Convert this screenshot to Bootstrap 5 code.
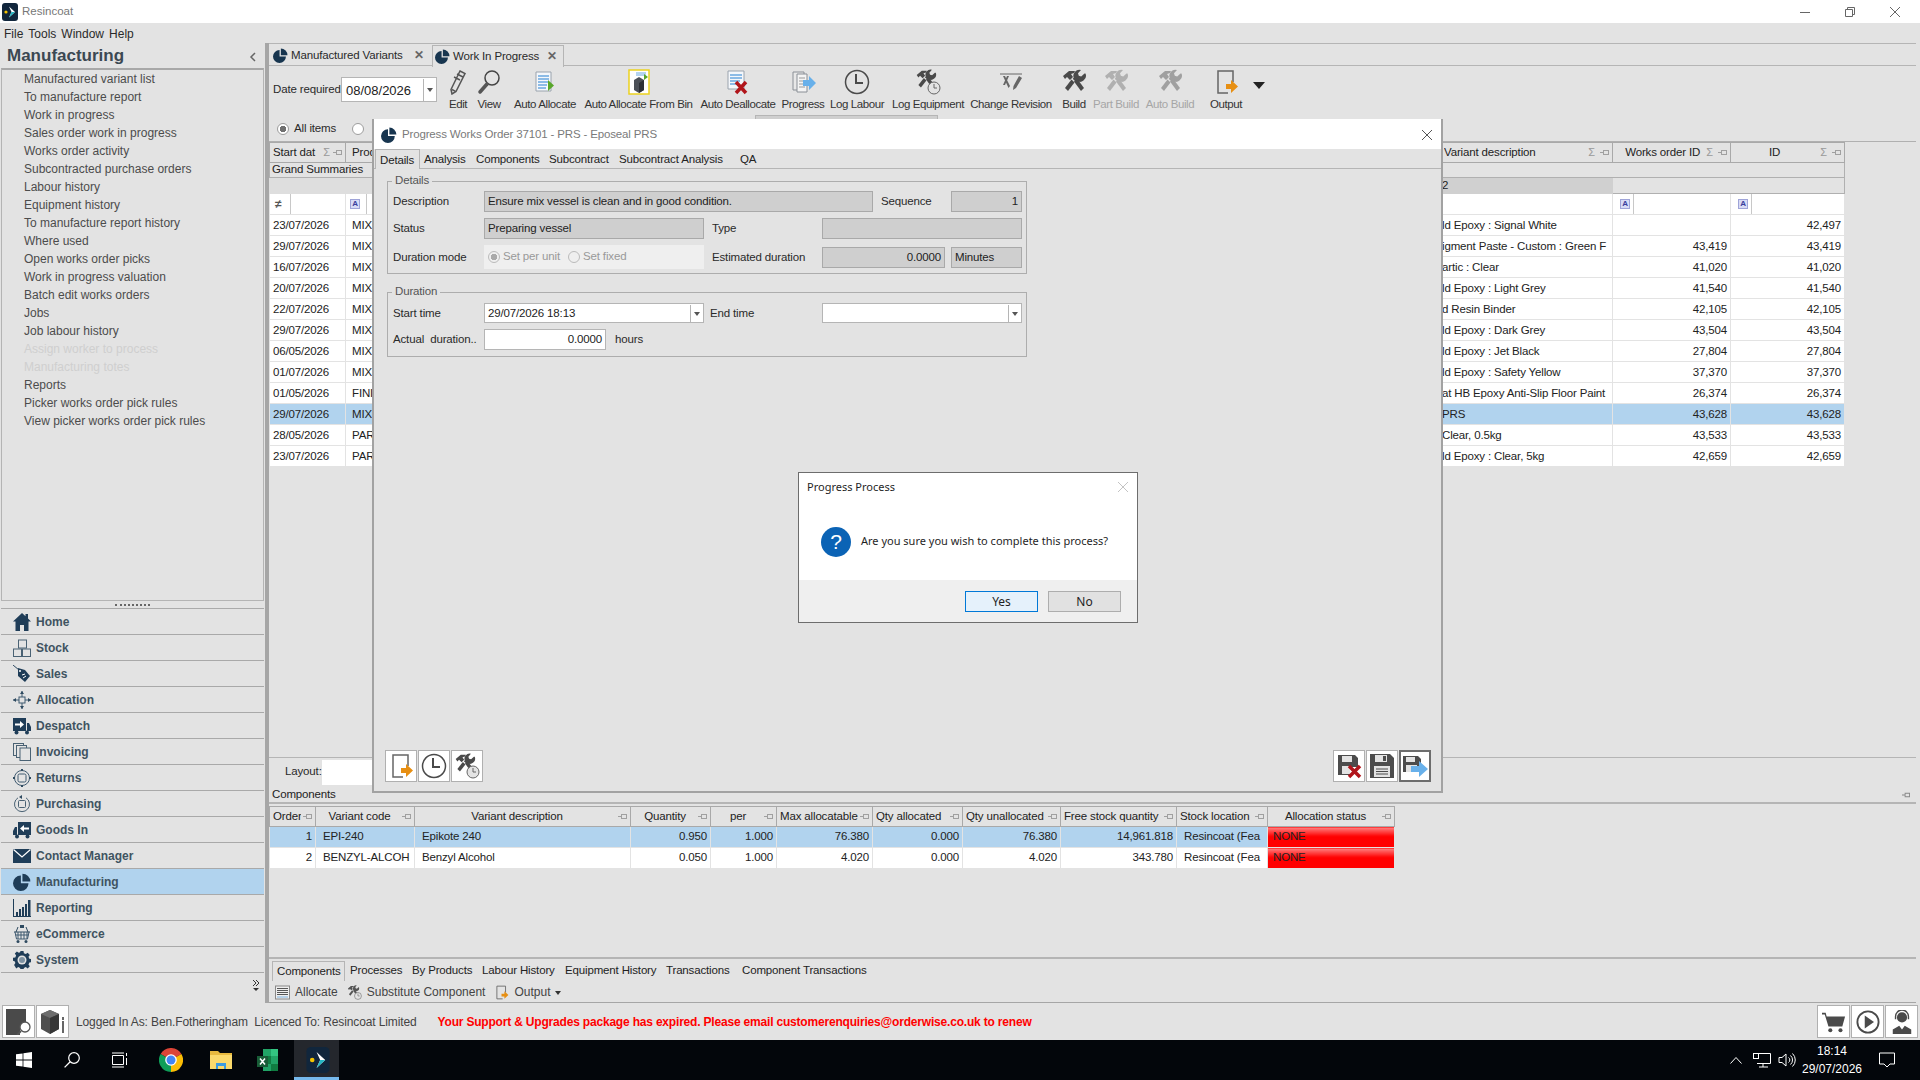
<!DOCTYPE html>
<html lang="en">
<head>
<meta charset="UTF-8">
<title>Resincoat</title>
<link href="https://cdn.jsdelivr.net/npm/bootstrap@5.3.3/dist/css/bootstrap.min.css" rel="stylesheet">
<style>
  body { margin: 0; background: #e3e3e3; font: 12px/1.2 "Liberation Sans", Arial, sans-serif; color: #2a2a2a; }
  .desk { position: relative; width: 1920px; height: 1080px; overflow: hidden; background: #e3e3e3; }
  svg { display: block; flex: none; }

  /* window chrome */
  .app-title { height: 23px; background: #fff; color: #777; padding-left: 2px; font-size: 11.5px; }
  .app-title span { margin-left: 2px; }
  .win-ctl { margin-left: auto; gap: 31px; padding-right: 18px; color: #666; }
  .menu-strip { height: 20px; gap: 5px; padding: 3px 0 0 4px; font-size: 12px; }

  /* left panel */
  .side { width: 264px; }
  .side-head { height: 25px; padding: 2px 7px 0; font-size: 17px; font-weight: 700; color: #3b4852; }
  .side-list { height: 533px; border: 1px solid #b4b4b4; border-top: 2px solid #a8a8a8; margin-left: 1px; padding-top: 0; background: #e3e3e3; }
  .side-list .list-group-item { background: none; border: 0; padding: 0 0 0 22px; height: 18px; line-height: 18px; color: #4c4c4c; font-size: 12px; }
  .side-list .list-group-item.disabled { color: #cfcfcf; }
  .grip { height: 7px; font-size: 0; }
  .grip i { width: 35px; height: 1px; border-top: 2px dotted #666; }
  .mod-list { border-top: 1px solid #aaa; margin-left: 1px; border-radius: 0; }
  .mod-list .list-group-item { height: 26px; padding: 1px 0 0 12px; background: none; border: 0; border-bottom: 1px solid #a9a9a9; border-radius: 0; font-weight: 700; color: #3f5361; gap: 5px; margin: 0; }
  .mod-list .list-group-item.active { background: #b1d3ee; color: #3f5361; margin: 0; }
  .mod-list svg { width: 18px; height: 18px; color: #1f3d58; }
  .side-foot { height: 30px; padding: 6px 4px 0 0; align-items: flex-end; }

  /* main area */
  .main-pane { width: 1651px; margin-left: 1px; border-left: 4px solid #a6a6a6; border-bottom: 1px solid #a6a6a6; height: 960px; font-size: 11.5px; letter-spacing: -.15px; }
  .doc-tabs { height: 23px; border-top: 1px solid #b5b5b5; border-bottom: 1px solid #b5b5b5; white-space: nowrap; }
  .doc-tab { height: 21px; gap: 3px; padding: 0 4px; }
  .doc-tab.first { width: 161px; margin-top: 1px; }
  .doc-tab.open { width: 132px; margin: 1px 0 -1px 2px; height: 22px; padding-left: 2px; border: 1px solid #b5b5b5; border-bottom: 0; background: #e3e3e3; }
  .doc-tab svg { width: 15px; height: 15px; color: #17354f; }
  .doc-tab b { margin-left: auto; font-size: 12px; color: #666; padding-right: 2px; }

  .tool-row { height: 51px; padding-left: 4px; }
  .date-lbl { width: 68px; padding-top: 17px; white-space: nowrap; }
  .date-box { width: 96px; height: 25px; margin-top: 11px; }
  .wbox { border-radius: 0; border: 1px solid #b5b5b5; background: #fff; color: #222; padding: 1px 3px 0; font-size: 11.5px; letter-spacing: -.15px; line-height: 1; min-height: 0; display: flex; align-items: center; }
  .wbox.ro { background: #cfcfcf; border-color: #a9a9a9; }
  .date-box.wbox { font-size: 13px; letter-spacing: 0; padding-left: 4px; }
  .drop { margin-left: auto; margin-right: -3px; width: 13px; align-self: stretch; border-left: 1px solid #b5b5b5; display: flex; align-items: center; justify-content: center; }
  .drop::after { content: ""; border: 3px solid transparent; border-top: 4px solid #555; border-bottom: 0; }
  .tool-strip { display: grid; grid-template-columns: 28px 34px 78px 109px 90px 40px 68px 74px 92px 34px 50px 58px 54px 12px; margin-left: 7px; }
  .tool-btn { display: flex; flex-direction: column; align-items: center; white-space: nowrap; height: 47px; padding-top: 3px; color: #333; letter-spacing: -.4px; }
  .tool-btn svg { width: 26px; height: 26px; margin-bottom: 3px; }
  .tool-btn.off { color: #a6a6a6; }

  .filter-row { height: 24px; padding-left: 8px; gap: 5px; }
  .rad { width: 12px; height: 12px; border-radius: 50%; border: 1px solid #9d9d9d; background: #fff; flex: none; display: inline-block; }
  .rad.on { background: radial-gradient(circle, #707070 0 3px, #fff 3.5px); }
  .rad.dim { border-color: #bbb; background: #efefef; }
  .rad.dim.on { background: radial-gradient(circle, #aaa 0 3px, #efefef 3.5px); }
  .rad.second { margin-left: 11px; }
  .rad.third { margin-left: 5px; }
  .hidden-combo { width: 183px; height: 5px; margin: -2px 0 0 386px; background: #cfcfcf; border: 1px solid #b5b5b5; align-self: flex-start; }

  .grid-band { border-top: 1px solid #b0b0b0; height: 616px; }
  .wgrid { --bs-table-bg: #fff; --bs-table-color: #222; --bs-table-border-color: #e3e3e3; table-layout: fixed; margin: 0; font-size: 11.5px; line-height: 1; }
  .wgrid > :not(caption) > * > * { padding: 0 3px; height: 21px; white-space: nowrap; overflow: hidden; vertical-align: middle; border-width: 1px; }
  .wgrid.upper { width: 1575px; }
  .wgrid.lower { width: 1125px; }
  .wgrid > thead > tr > th { --bs-table-bg: #e3e3e3; --bs-table-color: #5b5b5b; font-weight: 400; height: 20px; padding-right: 0; border-color: #a9a9a9; }
  .wgrid .cap { --bs-table-bg: #e3e3e3; height: 15px !important; border-color: #b0b0b0; padding-left: 2px; }
  .wgrid .band { --bs-table-bg: #dedede; height: 16px !important; border-color: #dedede; }
  .wgrid .band.dark { --bs-table-bg: #d0d0d0; border-color: #d0d0d0; }
  .wgrid .band.pale { --bs-table-bg: #e3e3e3; border-color: #b0b0b0; }
  .wgrid .fcell { height: 21px; }
  .wgrid tr.sel { --bs-table-bg: #b1d3ee; --bs-table-color: #555; }
  .wgrid .num { text-align: right; }
  .wgrid .vd, .wgrid > thead > tr > th.vd { padding-left: 44px; }
  .wgrid > tbody > tr > td.vd { padding-left: 42px; }
  .wgrid.upper > tbody > tr:nth-child(n+4) > td { padding-top: 1px; }
  .wgrid.lower > tbody > tr > td.tx { padding-left: 7px; }
  .wgrid .none { --bs-table-color: #2a0000; --bs-table-bg: transparent; background: linear-gradient(#ff8080, #ff0000 45%); padding-left: 5px; }
  .hcell { display: flex; align-items: center; gap: 5px; padding-right: 3px; }
  .hcell.tight { gap: 3px; }
  .hcell span { flex: 1; overflow: hidden; }
  .hcell.mid span { text-align: center; }
  .hcell i { font-style: normal; color: #999; font-size: 11px; }
  .hcell svg { width: 9px; height: 7px; color: #a0a0a0; }
  .abox { width: 10px; height: 10px; border: 1px solid #9fa4d8; background: #d8dbf5; color: #3a3f9c; font-size: 8px; font-weight: 700; line-height: 8px; text-align: center; display: block; margin-left: 1px; }
  .fbar { width: 18px; border-right: 1px solid #c8c8c8; height: 20px; display: flex; align-items: center; }
  .ne-mark { font-size: 12px; font-weight: 700; color: #555; padding-left: 2px; }

  .layout-row { height: 29px; border-top: 1px solid #b5b5b5; padding-left: 16px; background: #e3e3e3; }
  .layout-in { width: 120px; height: 25px; background: #fff; margin-left: 0; }
  .comp-bar { height: 18px; padding: 1px 0 0 3px; border-bottom: 2px solid #b5b5b5; color: #222; }
  .comp-bar svg { width: 8px; height: 10px; color: #888; margin-left: auto; margin-right: 6px; }
  .lower-wrap { margin-top: 2px; }
  .wgrid.lower .hcell { gap: 2px; }
  .sub-tabs { height: 24px; border-top: 2px solid #b5b5b5; margin-top: auto; padding-left: 3px; }
  .wnav { display: grid; font-size: 11.5px; letter-spacing: -.15px; }
  .wnav .nav-link { padding: 0 0 0 5px; color: #222; line-height: 19px; white-space: nowrap; }
  .wnav .nav-link.on { border: 1px solid #b5b5b5; border-bottom: 0; padding-left: 4px; background: #e3e3e3; }
  .sub-tabs .wnav { grid-template-columns: 73px 62px 70px 83px 101px 76px auto; margin-top: 2px; }
  .act-strip { height: 21px; padding: 2px 0 0 6px; color: #444; font-size: 12px; letter-spacing: 0; }
  .act-strip svg { width: 15px; height: 15px; }
  .act-strip svg.gap-l { margin-left: 9px; }
  .act-strip span { margin-left: 5px; }
  .act-strip svg.tiny { width: 6px; height: 4px; margin-left: 5px; }

  /* status + taskbar */
  .status-row { height: 37px; padding: 2px; }
  .sq-btn { width: 33px; height: 33px; background: #fff; border: 1px solid #b0b0b0; display: flex; align-items: center; justify-content: center; flex: none; padding: 0; border-radius: 0; }
  .sq-btn svg { width: 26px; height: 26px; color: #4a4a4a; }
  .sq-btn + .sq-btn { margin-left: 1px; }
  .status-right .sq-btn svg { width: 24px; height: 24px; }
  .login-txt { margin-left: 7px; padding-top: 2px; color: #444; white-space: nowrap; letter-spacing: -.12px; }
  .expired { margin-left: 21px; padding-top: 2px; color: #f00; font-weight: 700; white-space: nowrap; letter-spacing: -.19px; }
  .taskbar { height: 40px; background: #03060b; color: #fff; }
  .task-ic { width: 48px; height: 40px; display: flex; align-items: center; justify-content: center; flex: none; }
  .task-ic.chr { width: 54px; }
  .task-ic.exp { width: 45px; }
  .task-ic.xls { width: 49px; }
  .task-ic.on { background: #24272d; border-bottom: 3px solid #76b9ed; padding: 3px 0 0 2px; width: 45px; margin-left: 2px; }
  .tray { margin-left: auto; gap: 7px; padding-right: 25px; }
  .tray .chev { margin-right: 4px; }
  .clock { text-align: center; line-height: 18px; font-size: 12px; width: 64px; margin: 0 8px 0 -3px; }

  /* floating windows */
  .float-win { position: absolute; left: 372px; top: 119px; width: 1071px; height: 674px; background: #e3e3e3; border: 2px solid #a2a2a2; border-top: 0; font-size: 11.5px; letter-spacing: -.15px; }
  .float-head { height: 30px; background: #fff; color: #7a7a7a; padding: 1px 8px 0 7px; gap: 5px; }
  .float-head svg.pie { width: 16px; height: 16px; color: #17354f; }
  .float-x { margin-left: auto; }
  .float-win .wnav { grid-template-columns: 45px 52px 73px 70px 121px auto; height: 20px; border-bottom: 1px solid #b5b5b5; padding-left: 1px; }
  .float-win .wnav .nav-link { padding-left: 4px; line-height: 21px; }
  .float-win .wnav .nav-link.on { margin-bottom: -1px; padding-left: 4px; height: 20px; line-height: 20px; }
  .gbox { position: relative; width: 640px; margin-left: 13px; border: 1px solid #adadad; padding-left: 5px; }
  .gbox.one { margin-top: 12px; height: 93px; padding-top: 9px; }
  .gbox.two { margin-top: 18px; height: 65px; padding-top: 10px; }
  .gtitle { position: absolute; left: 4px; top: -8px; background: #e3e3e3; padding: 0 3px; color: #555; }
  .frow { display: grid; align-items: center; height: 21px; margin-bottom: 6px; }
  .frow > span { padding-top: 1px; }
  .frow .wbox { height: 21px; }
  .f1 { grid-template-columns: 91px 389px 8px 70px 71px; }
  .f2 { grid-template-columns: 91px 220px 8px 110px 200px; }
  .f3 { grid-template-columns: 91px 220px 8px 110px 123px 6px 71px; height: 24px; }
  .f4 { grid-template-columns: 91px 220px 6px 112px 200px; height: 20px; }
  .f4 .wbox { height: 20px; }
  .f5 { grid-template-columns: 91px 122px 9px auto; margin: 0; }
  .rad-panel { height: 24px; background: #efefef; padding-left: 4px; gap: 3px; color: #999; }
  .foot-btns { margin-top: auto; padding: 0 10px 9px 11px; }
  .foot-btns .sq-btn { width: 32px; height: 32px; }
  .foot-btns .sq-btn.group-r { margin-left: auto; }
  .foot-btns .sq-btn.act { border: 2px solid #6d6d6d; }

  .msg-win { position: absolute; left: 798px; top: 472px; width: 340px; height: 151px; background: #fff; border: 1px solid #6d6d6d; font-family: "Noto Sans", "Open Sans", sans-serif; color: #1f1f1f; font-size: 11px; }
  .msg-head { height: 28px; padding: 0 8px; }
  .msg-body { height: 79px; padding: 26px 0 0 22px; gap: 10px; align-items: flex-start; }
  .msg-body span { padding-top: 7px; }
  .msg-foot { height: 42px; background: #efefef; padding: 11px 16px 0 0; gap: 10px; justify-content: flex-end; }
  .msg-btn { width: 73px; height: 21px; padding: 0; border-radius: 0; font-size: 12px; line-height: 1; background: #e1e1e1; border: 1px solid #adadad; color: #1f1f1f; }
  .msg-btn.def { background: #e5f1fb; border-color: #0078d7; }
</style>
</head>
<body>

<svg class="d-none" xmlns="http://www.w3.org/2000/svg">
  <symbol id="i-pie" viewBox="0 0 16 16"><path fill="currentColor" d="M7 2.2A6.9 6.9 0 1 0 13.8 9H7z"/><path fill="currentColor" d="M8.4.6A7 7 0 0 1 15.4 7.6H8.4z"/></symbol>
  <symbol id="i-logo" viewBox="0 0 16 18"><rect width="16" height="18" rx="3" fill="#11263c"/><path fill="#fff" d="M7 3.500l6 5.500-6 5.500 2.500-5.500z"/><path fill="#23b6c4" d="M9.500 9L13 9 7 14.500z"/><circle cx="4" cy="9" r="1.600" fill="#f5c400"/></symbol>
  <symbol id="i-pin" viewBox="0 0 9 7"><path fill="currentColor" d="M0 3h3v1H0zM3 1h1v5H3zM4 1h5v1H4zM4 5h5v1H4zM8 1h1v5H8z"/></symbol>
  <symbol id="i-home" viewBox="0 0 18 18"><path fill="currentColor" d="M9 0L0 8.500h2.500V18h4.500v-6h4v6h4.500V8.500H18l-3-2.900V1h-2.500v2.200z"/></symbol>
  <symbol id="i-stock" viewBox="0 0 18 18"><g fill="none" stroke="#4a6274"><rect x="5.500" y="1" width="8" height="8"/><rect x=".5" y="10" width="8" height="7.500"/><rect x="9.500" y="10" width="8" height="7.500"/></g></symbol>
  <symbol id="i-sales" viewBox="0 0 18 18"><path fill="none" stroke="#2e4a60" d="M0 0l6 5"/><path fill="currentColor" d="M5 3l7 2 5 6-5 6-7-6z"/><circle cx="7" cy="6" r="1" fill="#fff"/><path fill="none" stroke="#fff" d="M9 10l3-1M10 13l3-2"/></symbol>
  <symbol id="i-alloc" viewBox="0 0 18 18"><g fill="none" stroke="#3f5a70"><path d="M9 0v18M0 9h18"/><rect x="6" y="6" width="6" height="6" fill="#e3e3e3"/></g><path fill="#2e4a60" d="M9 0l2 3H7zM9 18l2-3H7zM0 9l3-2v4zM18 9l-3-2v4z"/></symbol>
  <symbol id="i-desp" viewBox="0 0 18 18"><path fill="currentColor" d="M0 1h13v13H0zM14 6h2l2 4v4h-4z"/><circle cx="3.500" cy="15.500" r="2" fill="currentColor"/><circle cx="14" cy="15.500" r="2" fill="currentColor"/><path fill="#fff" d="M2 6.500h5V4l4 3.500-4 3.500V8.500H2z"/></symbol>
  <symbol id="i-inv" viewBox="0 0 18 18"><g fill="#e3e3e3" stroke="#4a6274"><rect x=".5" y=".5" width="10" height="12"/><rect x="3.500" y="2.500" width="10" height="12"/><rect x="7" y="5" width="10.500" height="12.500"/></g></symbol>
  <symbol id="i-ret" viewBox="0 0 18 18"><g fill="none" stroke="#3f5a70"><circle cx="9" cy="9" r="7.500"/><rect x="5" y="5" width="8" height="8" rx="1.500"/></g><path fill="#2e4a60" d="M8 0h2v2H8zM8 16h2v2H8zM0 8h2v2H0zM16 8h2v2h-2z"/></symbol>
  <symbol id="i-purch" viewBox="0 0 18 18"><g fill="none" stroke="#4a6274"><path d="M5 2.800A7.500 7.500 0 1 0 13 2.800"/><rect x="5.500" y="5.500" width="7" height="7" rx="1"/></g><path fill="#2e4a60" d="M9 0v4L6 2z"/></symbol>
  <symbol id="i-gin" viewBox="0 0 18 18"><path fill="currentColor" d="M5 1h13v13H5zM4 6H2L0 10v4h4z"/><circle cx="14.500" cy="15.500" r="2" fill="currentColor"/><circle cx="4" cy="15.500" r="2" fill="currentColor"/><path fill="#fff" d="M16 6.500h-5V4L7 7.500l4 3.500V8.500h5z"/></symbol>
  <symbol id="i-mail" viewBox="0 0 18 18"><rect y="2" width="18" height="14" fill="currentColor"/><path fill="none" stroke="#fff" stroke-width="1.200" d="M.5 2.500L9 10l8.500-7.500"/></symbol>
  <symbol id="i-bars" viewBox="0 0 18 18"><path fill="currentColor" d="M0 0h1v17h17v1H0zM3 13h2v4H3zM6 10h2v7H6zM9 8h2v9H9zM12 5h2v12h-2zM15 1h2.500v16H15z"/></symbol>
  <symbol id="i-cart" viewBox="0 0 18 18"><path fill="none" stroke="#2e4a60" d="M1 7h16M3 7l2-5M15 7l-2-5"/><path fill="none" stroke="#3f5a70" d="M2 7l1.500 7h11L16 7M5 7v7M8 7v7M11 7v7M14 7v7M2.500 10h13"/><path fill="#2e4a60" d="M7 0h4v3H7z"/><circle cx="5" cy="16.500" r="1.500" fill="#2e4a60"/><circle cx="13" cy="16.500" r="1.500" fill="#2e4a60"/></symbol>
  <symbol id="i-gear" viewBox="0 0 18 18"><path fill="currentColor" d="M7.500 0h3l.4 2.300 1.900.8 1.900-1.300 2.100 2.100-1.300 1.900.8 1.900 2.300.4v3l-2.300.4-.8 1.900 1.300 1.900-2.100 2.100-1.900-1.300-1.900.8-.4 2.300h-3l-.4-2.300-1.900-.8-1.900 1.300L1.100 14l1.300-1.900-.8-1.900L0 9.800v-3l2.300-.4.800-1.900L1.800 2.600 3.900.5l1.900 1.300 1.300-.5z"/><circle cx="9" cy="9" r="4.500" fill="#e3e3e3"/><circle cx="9" cy="9" r="3" fill="#7f93a3"/></symbol>
  <symbol id="i-pencil" viewBox="0 0 26 26"><g fill="none" stroke="#555" stroke-width="1.500"><path d="M15 2l5 2.500-9 18-4 2.500-1-4.500zM9 8l6 3M12 5l6 3"/><path d="M7 20.500l3.500 1.800"/></g></symbol>
  <symbol id="i-lens" viewBox="0 0 26 26"><circle cx="16" cy="9" r="7" fill="none" stroke="#444" stroke-width="1.500"/><path stroke="#555" stroke-width="3.500" stroke-linecap="round" d="M11 15L4 23"/></symbol>
  <symbol id="i-pagego" viewBox="0 0 26 26"><path fill="#f4f7fb" stroke="#9aa3ad" d="M4 3h15v19H4z"/><path stroke="#6aa8e0" stroke-width="1.500" d="M6 7h11M6 10h11M6 13h10M6 16h9M6 19h8"/><path fill="#58a62a" d="M16 11l6 5.500-6 5.500z"/></symbol>
  <symbol id="i-boxgo" viewBox="0 0 26 26"><rect x="3" y="1" width="20" height="24" fill="#fff" stroke="#ecd21f" stroke-width="1.500"/><path fill="#4c5057" d="M8 11l5-3 5 3v10l-5 3-5-3z"/><path fill="#2d3036" d="M13 14l5-3v10l-5 3z"/><path stroke="#6aa8e0" d="M10 4h10M10 6h10"/><path fill="#58a62a" d="M18 5l4 3-4 3z"/></symbol>
  <symbol id="i-pagex" viewBox="0 0 26 26"><path fill="#f4f7fb" stroke="#9aa3ad" d="M3 2h16v18H3z"/><path stroke="#6aa8e0" stroke-width="1.500" d="M5 6h12M5 9h12M5 12h10M5 15h8"/><path stroke="#b1151b" stroke-width="3.500" d="M11 13l10 11M21 13L11 24"/></symbol>
  <symbol id="i-docsgo" viewBox="0 0 26 26"><path fill="#e8e8e8" stroke="#8a8f96" d="M3 3h11v18H3z"/><path fill="#f4f4f4" stroke="#8a8f96" d="M7 5h10v18H7z"/><path stroke="#9a9a9a" d="M9 9h6M9 12h6M9 15h6M9 18h6"/><path fill="#68b0ea" d="M13 11h6V7l7 7-7 7v-4h-6z"/></symbol>
  <symbol id="i-clock" viewBox="0 0 26 26"><circle cx="13" cy="13" r="11.500" fill="none" stroke="#4a4a4a" stroke-width="1.500"/><path fill="none" stroke="#4a4a4a" stroke-width="2" d="M12 5v9h7"/></symbol>
  <symbol id="i-tools" viewBox="0 0 26 26"><g fill="currentColor"><path d="M2 7l6-5h6l-1 2-3 1 2 3-3 3-3-3-2 2z"/><path d="M10.500 10.500l3 3L7 22l-3-3z"/><path d="M23.500 4.500l-3.300 3-2.400-.8-.8-2.400 3-3.300a6 6 0 0 0-7.300 7.800l-1 1 3 3 1-1a6 6 0 0 0 8.800-7.300z"/><path d="M13 12.500l3-3 7 9.500-3 3z"/></g></symbol>
  <symbol id="i-toolclock" viewBox="0 0 26 26"><use href="#i-tools" width="22" height="22"/><circle cx="19" cy="19" r="6" fill="#e3e3e3" stroke="#666"/><path fill="none" stroke="#666" d="M19 15v4h3"/></symbol>
  <symbol id="i-rev" viewBox="0 0 26 26"><path fill="none" stroke="#666" d="M2 5h22"/><path fill="currentColor" d="M5 7h2l5 10-1.500 2zM9 7h2l-4 9H5zM21 7l3 2-6 10-3 2 .5-4z"/></symbol>
  <symbol id="i-out" viewBox="0 0 26 26"><path fill="none" stroke="#666" stroke-width="1.500" d="M20 13V2H5v22h10"/><path fill="#e78f13" d="M13 15h5v-4l7 6.500-7 6.500v-4h-5z"/></symbol>
  <symbol id="i-caret" viewBox="0 0 12 26"><path fill="#222" d="M0 13h12l-6 7z"/></symbol>
  <symbol id="i-list" viewBox="0 0 15 15"><rect x=".5" y="1" width="14" height="13" fill="#eee" stroke="#888"/><path stroke="#555" d="M2 3.500h11M2 5.500h11M2 7.500h11M2 9.500h11"/><path stroke="#7db1df" d="M2 12h11"/></symbol>
  <symbol id="i-floppyx" viewBox="0 0 26 26"><path fill="#4c4c4c" d="M2 2h17l3 3v9h-8v8H2z"/><path fill="#e3e3e3" d="M6 3h10v6H6zM6 13h8v8H6z"/><path stroke="#b1151b" stroke-width="3.500" d="M13 13l11 11M24 13L13 24"/></symbol>
  <symbol id="i-floppy" viewBox="0 0 26 26"><path fill="#4c4c4c" d="M1 1h20l4 4v20H1z"/><path fill="#e3e3e3" d="M6 2h12v7H6zM5 13h16v11H5z"/><path fill="#4c4c4c" d="M14 3h3v5h-3z"/><path stroke="#4c4c4c" d="M7 16h12M7 18.500h12M7 21h12"/></symbol>
  <symbol id="i-floppygo" viewBox="0 0 26 26"><path fill="#4c4c4c" d="M1 3h15l3 3v13H1z"/><path fill="#e3e3e3" d="M4 4h9v5H4zM4 12h11v7H4z"/><path fill="#68b0ea" d="M9 13h8V8l9 8-9 8v-5H9z"/></symbol>
  <symbol id="i-findsq" viewBox="0 0 26 26"><path fill="#4a4a4a" d="M0 0h20v18h-6v8H0z"/><circle cx="19" cy="18" r="5" fill="#fff" stroke="#555" stroke-width="1.300"/><path stroke="#555" stroke-width="2" d="M15 22l-4 4"/></symbol>
  <symbol id="i-cubei" viewBox="0 0 26 26"><path fill="#4f4f4f" d="M1 5l9-4 9 4v15l-9 5-9-5z"/><path fill="#6d6d6d" d="M1 5l9-4 9 4-9 4z"/><path fill="#363636" d="M10 9l9-4v15l-9 5z"/><path fill="#666" d="M22 8h2v3h-2zM22 12h2v12h-2z"/></symbol>
  <symbol id="i-basket" viewBox="0 0 26 26"><path fill="currentColor" d="M0 3h4l1 4h20l-3 11H7L3 5H0z"/><circle cx="9" cy="22" r="2.200" fill="currentColor"/><circle cx="20" cy="22" r="2.200" fill="currentColor"/></symbol>
  <symbol id="i-play" viewBox="0 0 26 26"><circle cx="13" cy="13" r="11.500" fill="none" stroke="currentColor" stroke-width="2"/><path fill="currentColor" d="M9.500 6l10 7-10 7z"/></symbol>
  <symbol id="i-agent" viewBox="0 0 26 26"><circle cx="13" cy="8" r="5.500" fill="currentColor"/><path fill="none" stroke="currentColor" stroke-width="1.500" d="M6 10V7a7 7 0 0 1 14 0v3"/><path fill="currentColor" d="M3 26v-5l7-4 3 4 3-4 7 4v5z"/></symbol>
  <symbol id="i-win" viewBox="0 0 16 16"><path fill="#fff" d="M0 2.300L6.600 1.400V7.600H0zM7.400 1.300L16 0V7.600H7.400zM0 8.400H6.600V14.600L0 13.700zM7.400 8.400H16V16L7.400 14.700z"/></symbol>
  <symbol id="i-search" viewBox="0 0 16 16"><circle cx="10" cy="6" r="5.300" fill="none" stroke="#fff" stroke-width="1.200"/><path stroke="#fff" stroke-width="1.300" d="M6.200 9.800L.6 15.400"/></symbol>
  <symbol id="i-view" viewBox="0 0 16 16"><path fill="none" stroke="#fff" d="M.5 3.500h11v9H.5zM0 1h12M0 15h12M14.500 1v3M14.500 6v7"/></symbol>
  <symbol id="i-chrome" viewBox="0 0 24 24"><path fill="#db4437" d="M12 12L1.600 6A12 12 0 0 1 22.400 6z"/><path fill="#fbbc05" d="M12 12L22.400 6A12 12 0 0 1 12 24z"/><path fill="#0f9d58" d="M12 12V24A12 12 0 0 1 1.600 6z"/><circle cx="12" cy="12" r="5.800" fill="#fff"/><circle cx="12" cy="12" r="4.500" fill="#4285f4"/></symbol>
  <symbol id="i-folder" viewBox="0 0 22 18"><path fill="#e8b93f" d="M0 0h8l2 2h12v3H0z"/><path fill="#fbd96c" d="M0 4h22v14H0z"/><path fill="#3d9be0" d="M6 12h10v6h-2v-3H8v3H6z"/></symbol>
  <symbol id="i-excel" viewBox="0 0 22 22"><path fill="#21a366" d="M6 0h15v22H6z"/><path fill="#33c481" d="M14 0h7v7h-7z"/><path fill="#107c41" d="M6 7h8v8H6zM14 15h7v7h-7z"/><path fill="#185c37" d="M0 7h11v11H0z"/><path stroke="#fff" stroke-width="1.500" d="M3 9.500l5 6M8 9.500l-5 6"/></symbol>
  <symbol id="i-net" viewBox="0 0 18 16"><path fill="none" stroke="#fff" d="M4 1.500h13.500v10H4M10 11.500V15M6 15h9"/><rect x=".5" y="1.500" width="5" height="5" fill="#03060b" stroke="#fff"/></symbol>
  <symbol id="i-sound" viewBox="0 0 18 16"><path fill="none" stroke="#fff" d="M1 5.500h3L8 2v12L4 10.500H1zM10.500 5.500a3 3 0 0 1 0 5M12.500 3.500a6 6 0 0 1 0 9M14.500 1.500a9 9 0 0 1 0 13"/></symbol>
  <symbol id="i-note" viewBox="0 0 16 16"><path fill="none" stroke="#fff" d="M.5 1h15v11h-4.500L8 15l-3-3H.5z"/></symbol>
</svg>

<div class="desk d-flex flex-column">

  <div class="app-title d-flex align-items-center">
    <svg width="16" height="18"><use href="#i-logo"/></svg>
    <span class="ms-1">Resincoat</span>
    <div class="win-ctl d-flex align-items-center">
      <svg width="14" height="12"><path stroke="#666" d="M2 6.500h10"/></svg>
      <svg width="14" height="12"><path fill="none" stroke="#666" d="M2.500 3.500h7v7h-7zM4.500 3V1.500h7v7H10"/></svg>
      <svg width="14" height="12"><path stroke="#666" d="M2 1l10 10M12 1L2 11"/></svg>
    </div>
  </div>

  <div class="menu-strip d-flex align-items-center"><span>File</span><span>Tools</span><span>Window</span><span>Help</span></div>

  <div class="d-flex">
    <aside class="side d-flex flex-column">
      <div class="side-head d-flex align-items-center justify-content-between">
        <span>Manufacturing</span>
        <svg width="8" height="10"><path fill="none" stroke="#666" stroke-width="1.500" d="M6 1L2 5l4 4"/></svg>
      </div>
      <div class="list-group side-list rounded-0">
        <a class="list-group-item">Manufactured variant list</a>
        <a class="list-group-item">To manufacture report</a>
        <a class="list-group-item">Work in progress</a>
        <a class="list-group-item">Sales order work in progress</a>
        <a class="list-group-item">Works order activity</a>
        <a class="list-group-item">Subcontracted purchase orders</a>
        <a class="list-group-item">Labour history</a>
        <a class="list-group-item">Equipment history</a>
        <a class="list-group-item">To manufacture report history</a>
        <a class="list-group-item">Where used</a>
        <a class="list-group-item">Open works order picks</a>
        <a class="list-group-item">Work in progress valuation</a>
        <a class="list-group-item">Batch edit works orders</a>
        <a class="list-group-item">Jobs</a>
        <a class="list-group-item">Job labour history</a>
        <a class="list-group-item disabled">Assign worker to process</a>
        <a class="list-group-item disabled">Manufacturing totes</a>
        <a class="list-group-item">Reports</a>
        <a class="list-group-item">Picker works order pick rules</a>
        <a class="list-group-item">View picker works order pick rules</a>
      </div>
      <div class="grip d-flex justify-content-center align-items-center"><i></i></div>
      <div class="list-group mod-list">
        <a class="list-group-item d-flex align-items-center"><svg><use href="#i-home"/></svg>Home</a>
        <a class="list-group-item d-flex align-items-center"><svg><use href="#i-stock"/></svg>Stock</a>
        <a class="list-group-item d-flex align-items-center"><svg><use href="#i-sales"/></svg>Sales</a>
        <a class="list-group-item d-flex align-items-center"><svg><use href="#i-alloc"/></svg>Allocation</a>
        <a class="list-group-item d-flex align-items-center"><svg><use href="#i-desp"/></svg>Despatch</a>
        <a class="list-group-item d-flex align-items-center"><svg><use href="#i-inv"/></svg>Invoicing</a>
        <a class="list-group-item d-flex align-items-center"><svg><use href="#i-ret"/></svg>Returns</a>
        <a class="list-group-item d-flex align-items-center"><svg><use href="#i-purch"/></svg>Purchasing</a>
        <a class="list-group-item d-flex align-items-center"><svg><use href="#i-gin"/></svg>Goods In</a>
        <a class="list-group-item d-flex align-items-center"><svg><use href="#i-mail"/></svg>Contact Manager</a>
        <a class="list-group-item active d-flex align-items-center"><svg><use href="#i-pie"/></svg>Manufacturing</a>
        <a class="list-group-item d-flex align-items-center"><svg><use href="#i-bars"/></svg>Reporting</a>
        <a class="list-group-item d-flex align-items-center"><svg><use href="#i-cart"/></svg>eCommerce</a>
        <a class="list-group-item d-flex align-items-center"><svg><use href="#i-gear"/></svg>System</a>
      </div>
      <div class="side-foot d-flex flex-column">
        <svg width="8" height="12"><path fill="none" stroke="#333" d="M1 1l3 3-3 3M4 1l3 3-3 3"/><path fill="#333" d="M1 9h6l-3 3z"/></svg>
      </div>
    </aside>

    <main class="main-pane d-flex flex-column">
      <div class="doc-tabs d-flex">
        <div class="doc-tab first d-flex align-items-center"><svg><use href="#i-pie"/></svg>Manufactured Variants<b>✕</b></div>
        <div class="doc-tab open d-flex align-items-center"><svg><use href="#i-pie"/></svg>Work In Progress<b>✕</b></div>
      </div>

      <div class="tool-row d-flex align-items-start">
        <span class="date-lbl">Date required</span>
        <div class="form-control wbox date-box">08/08/2026<span class="drop"></span></div>
        <div class="tool-strip">
          <div class="tool-btn"><svg><use href="#i-pencil"/></svg>Edit</div>
          <div class="tool-btn"><svg><use href="#i-lens"/></svg>View</div>
          <div class="tool-btn"><svg><use href="#i-pagego"/></svg>Auto Allocate</div>
          <div class="tool-btn"><svg><use href="#i-boxgo"/></svg>Auto Allocate From Bin</div>
          <div class="tool-btn"><svg><use href="#i-pagex"/></svg>Auto Deallocate</div>
          <div class="tool-btn"><svg><use href="#i-docsgo"/></svg>Progress</div>
          <div class="tool-btn"><svg><use href="#i-clock"/></svg>Log Labour</div>
          <div class="tool-btn"><svg color="#4a4a4a"><use href="#i-toolclock"/></svg>Log Equipment</div>
          <div class="tool-btn"><svg color="#666"><use href="#i-rev"/></svg>Change Revision</div>
          <div class="tool-btn"><svg color="#4a4a4a"><use href="#i-tools"/></svg>Build</div>
          <div class="tool-btn off"><svg color="#b0b0b0"><use href="#i-tools"/></svg>Part Build</div>
          <div class="tool-btn off"><svg color="#a0a0a0"><use href="#i-tools"/></svg>Auto Build</div>
          <div class="tool-btn"><svg><use href="#i-out"/></svg>Output</div>
          <div class="tool-btn"><svg width="12"><use href="#i-caret"/></svg></div>
        </div>
      </div>

      <div class="filter-row d-flex align-items-center">
        <span class="rad on"></span><span>All items</span>
        <span class="rad second"></span>
        <span class="hidden-combo"></span>
      </div>

      <div class="grid-band">
        <table class="table table-bordered wgrid upper">
          <colgroup><col style="width:76px"><col style="width:1054px"><col style="width:213px"><col style="width:118px"><col style="width:114px"></colgroup>
          <thead>
            <tr>
              <th><div class="hcell tight"><span>Start dat</span><i>Σ</i><svg><use href="#i-pin"/></svg></div></th>
              <th><div class="hcell"><span>&nbsp;Prod</span></div></th>
              <th class="vd"><div class="hcell"><span>Variant description</span><i>Σ</i><svg><use href="#i-pin"/></svg></div></th>
              <th><div class="hcell"><span>&nbsp;&nbsp;&nbsp;Works order ID</span><i>Σ</i><svg><use href="#i-pin"/></svg></div></th>
              <th><div class="hcell mid"><span>ID</span><i>Σ</i><svg><use href="#i-pin"/></svg></div></th>
            </tr>
          </thead>
          <tbody>
            <tr><td colspan="5" class="cap">Grand Summaries</td></tr>
            <tr><td colspan="2" class="band"></td><td class="band dark vd">2</td><td colspan="2" class="band pale"></td></tr>
            <tr>
              <td class="fcell"><div class="fbar"><span class="ne-mark">≠</span></div></td>
              <td class="fcell"><div class="fbar"><span class="abox">A</span></div></td>
              <td class="fcell"></td>
              <td class="fcell"><div class="fbar"><span class="abox ms-1">A</span></div></td>
              <td class="fcell"><div class="fbar"><span class="abox ms-1">A</span></div></td>
            </tr>
            <tr><td>23/07/2026</td><td>&nbsp;MIX</td><td class="vd">ld Epoxy : Signal White</td><td class="num"></td><td class="num">42,497</td></tr>
            <tr><td>29/07/2026</td><td>&nbsp;MIX</td><td class="vd">igment Paste - Custom : Green F</td><td class="num">43,419</td><td class="num">43,419</td></tr>
            <tr><td>16/07/2026</td><td>&nbsp;MIX</td><td class="vd">artic : Clear</td><td class="num">41,020</td><td class="num">41,020</td></tr>
            <tr><td>20/07/2026</td><td>&nbsp;MIX</td><td class="vd">ld Epoxy : Light Grey</td><td class="num">41,540</td><td class="num">41,540</td></tr>
            <tr><td>22/07/2026</td><td>&nbsp;MIX</td><td class="vd">d Resin Binder</td><td class="num">42,105</td><td class="num">42,105</td></tr>
            <tr><td>29/07/2026</td><td>&nbsp;MIX</td><td class="vd">ld Epoxy : Dark Grey</td><td class="num">43,504</td><td class="num">43,504</td></tr>
            <tr><td>06/05/2026</td><td>&nbsp;MIX</td><td class="vd">ld Epoxy : Jet Black</td><td class="num">27,804</td><td class="num">27,804</td></tr>
            <tr><td>01/07/2026</td><td>&nbsp;MIX</td><td class="vd">ld Epoxy : Safety Yellow</td><td class="num">37,370</td><td class="num">37,370</td></tr>
            <tr><td>01/05/2026</td><td>&nbsp;FINI</td><td class="vd">at HB Epoxy Anti-Slip Floor Paint</td><td class="num">26,374</td><td class="num">26,374</td></tr>
            <tr class="sel"><td>29/07/2026</td><td>&nbsp;MIX</td><td class="vd">PRS</td><td class="num">43,628</td><td class="num">43,628</td></tr>
            <tr><td>28/05/2026</td><td>&nbsp;PAR</td><td class="vd">Clear, 0.5kg</td><td class="num">43,533</td><td class="num">43,533</td></tr>
            <tr><td>23/07/2026</td><td>&nbsp;PAR</td><td class="vd">ld Epoxy : Clear, 5kg</td><td class="num">42,659</td><td class="num">42,659</td></tr>
          </tbody>
        </table>
      </div>

      <div class="layout-row d-flex align-items-center">Layout:<div class="layout-in"></div></div>
      <div class="comp-bar d-flex align-items-center">Components<svg><use href="#i-pin"/></svg></div>

      <div class="lower-wrap">
        <table class="table table-bordered wgrid lower">
          <colgroup><col style="width:46px"><col style="width:99px"><col style="width:216px"><col style="width:80px"><col style="width:66px"><col style="width:96px"><col style="width:90px"><col style="width:98px"><col style="width:116px"><col style="width:91px"><col style="width:127px"></colgroup>
          <thead>
            <tr>
              <th><div class="hcell"><span>Order</span><svg><use href="#i-pin"/></svg></div></th>
              <th><div class="hcell mid"><span>Variant code</span><svg><use href="#i-pin"/></svg></div></th>
              <th><div class="hcell mid"><span>Variant description</span><svg><use href="#i-pin"/></svg></div></th>
              <th><div class="hcell mid"><span>Quantity</span><svg><use href="#i-pin"/></svg></div></th>
              <th><div class="hcell mid"><span>per</span><svg><use href="#i-pin"/></svg></div></th>
              <th><div class="hcell"><span>Max allocatable</span><svg><use href="#i-pin"/></svg></div></th>
              <th><div class="hcell"><span>Qty allocated</span><svg><use href="#i-pin"/></svg></div></th>
              <th><div class="hcell"><span>Qty unallocated</span><svg><use href="#i-pin"/></svg></div></th>
              <th><div class="hcell"><span>Free stock quantity</span><svg><use href="#i-pin"/></svg></div></th>
              <th><div class="hcell"><span>Stock location</span><svg><use href="#i-pin"/></svg></div></th>
              <th><div class="hcell mid"><span>Allocation status</span><svg><use href="#i-pin"/></svg></div></th>
            </tr>
          </thead>
          <tbody>
            <tr class="sel"><td class="num">1</td><td class="tx">EPI-240</td><td class="tx">Epikote 240</td><td class="num">0.950</td><td class="num">1.000</td><td class="num">76.380</td><td class="num">0.000</td><td class="num">76.380</td><td class="num">14,961.818</td><td class="tx">Resincoat (Fea</td><td class="none">NONE</td></tr>
            <tr><td class="num">2</td><td class="tx">BENZYL-ALCOH</td><td class="tx">Benzyl Alcohol</td><td class="num">0.050</td><td class="num">1.000</td><td class="num">4.020</td><td class="num">0.000</td><td class="num">4.020</td><td class="num">343.780</td><td class="tx">Resincoat (Fea</td><td class="none">NONE</td></tr>
          </tbody>
        </table>
      </div>

      <div class="sub-tabs">
        <nav class="nav wnav">
          <a class="nav-link on">Components</a>
          <a class="nav-link">Processes</a>
          <a class="nav-link">By Products</a>
          <a class="nav-link">Labour History</a>
          <a class="nav-link">Equipment History</a>
          <a class="nav-link">Transactions</a>
          <a class="nav-link">Component Transactions</a>
        </nav>
      </div>
      <div class="act-strip d-flex align-items-center">
        <svg><use href="#i-list"/></svg><span>Allocate</span>
        <svg class="gap-l" color="#555"><use href="#i-toolclock"/></svg><span>Substitute Component</span>
        <svg class="gap-l"><use href="#i-out"/></svg><span>Output</span>
        <svg class="tiny"><path fill="#333" d="M0 0h6L3 4z"/></svg>
      </div>
    </main>
  </div>

  <div class="status-row d-flex align-items-center">
    <button class="sq-btn"><svg><use href="#i-findsq"/></svg></button>
    <button class="sq-btn"><svg><use href="#i-cubei"/></svg></button>
    <span class="login-txt">Logged In As: Ben.Fotheringham&nbsp; Licenced To: Resincoat Limited</span>
    <span class="expired">Your Support &amp; Upgrades package has expired. Please email customerenquiries@orderwise.co.uk to renew</span>
    <div class="status-right ms-auto d-flex">
      <button class="sq-btn"><svg><use href="#i-basket"/></svg></button>
      <button class="sq-btn"><svg><use href="#i-play"/></svg></button>
      <button class="sq-btn"><svg><use href="#i-agent"/></svg></button>
    </div>
  </div>

  <div class="taskbar d-flex align-items-center">
    <div class="task-ic"><svg width="16" height="16"><use href="#i-win"/></svg></div>
    <div class="task-ic"><svg width="16" height="16"><use href="#i-search"/></svg></div>
    <div class="task-ic"><svg width="16" height="16"><use href="#i-view"/></svg></div>
    <div class="task-ic chr"><svg width="24" height="24"><use href="#i-chrome"/></svg></div>
    <div class="task-ic exp"><svg width="22" height="18"><use href="#i-folder"/></svg></div>
    <div class="task-ic xls"><svg width="22" height="22"><use href="#i-excel"/></svg></div>
    <div class="task-ic on"><svg width="24" height="26"><use href="#i-logo"/></svg></div>
    <div class="tray d-flex align-items-center">
      <svg class="chev" width="12" height="8"><path fill="none" stroke="#fff" d="M.5 7.500L6 1.500l5.500 6"/></svg>
      <svg width="18" height="16"><use href="#i-net"/></svg>
      <svg width="18" height="16"><use href="#i-sound"/></svg>
      <div class="clock">18:14<br>29/07/2026</div>
      <svg width="16" height="16"><use href="#i-note"/></svg>
    </div>
  </div>

  <section class="float-win d-flex flex-column">
    <div class="float-head d-flex align-items-center">
      <svg class="pie"><use href="#i-pie"/></svg>
      <span>Progress Works Order 37101 - PRS - Eposeal PRS</span>
      <svg class="float-x" width="12" height="12"><path stroke="#555" d="M1 1l10 10M11 1L1 11"/></svg>
    </div>
    <nav class="nav wnav">
      <a class="nav-link on">Details</a>
      <a class="nav-link">Analysis</a>
      <a class="nav-link">Components</a>
      <a class="nav-link">Subcontract</a>
      <a class="nav-link">Subcontract Analysis</a>
      <a class="nav-link">QA</a>
    </nav>

    <div class="gbox one">
      <span class="gtitle">Details</span>
      <div class="frow f1">
        <span>Description</span>
        <div class="form-control wbox ro">Ensure mix vessel is clean and in good condition.</div>
        <span></span><span>Sequence</span>
        <div class="form-control wbox ro justify-content-end">1</div>
      </div>
      <div class="frow f2">
        <span>Status</span>
        <div class="form-control wbox ro">Preparing vessel</div>
        <span></span><span>Type</span>
        <div class="form-control wbox ro"></div>
      </div>
      <div class="frow f3">
        <span>Duration mode</span>
        <div class="rad-panel d-flex align-items-center">
          <span class="rad dim on"></span><span>Set per unit</span>
          <span class="rad dim third"></span><span>Set fixed</span>
        </div>
        <span></span><span>Estimated duration</span>
        <div class="form-control wbox ro justify-content-end">0.0000</div>
        <span></span>
        <div class="form-control wbox ro">Minutes</div>
      </div>
    </div>

    <div class="gbox two">
      <span class="gtitle">Duration</span>
      <div class="frow f4">
        <span>Start time</span>
        <div class="form-control wbox">29/07/2026 18:13<span class="drop"></span></div>
        <span></span><span>End time</span>
        <div class="form-control wbox"><span class="drop"></span></div>
      </div>
      <div class="frow f5">
        <span>Actual&nbsp; duration..</span>
        <div class="form-control wbox justify-content-end">0.0000</div>
        <span></span><span>hours</span>
      </div>
    </div>

    <div class="foot-btns d-flex">
      <button class="sq-btn"><svg><use href="#i-out"/></svg></button>
      <button class="sq-btn"><svg><use href="#i-clock"/></svg></button>
      <button class="sq-btn"><svg color="#4a4a4a"><use href="#i-toolclock"/></svg></button>
      <button class="sq-btn group-r"><svg><use href="#i-floppyx"/></svg></button>
      <button class="sq-btn"><svg><use href="#i-floppy"/></svg></button>
      <button class="sq-btn act"><svg><use href="#i-floppygo"/></svg></button>
    </div>
  </section>

  <section class="msg-win">
    <div class="msg-head d-flex align-items-center justify-content-between">
      <span>Progress Process</span>
      <svg width="12" height="12"><path stroke="#c4c4c4" d="M1 1l10 10M11 1L1 11"/></svg>
    </div>
    <div class="msg-body d-flex">
      <svg width="30" height="30" viewBox="0 0 30 30"><circle cx="15" cy="15" r="15" fill="#0b63b5"/><text x="15" y="22" text-anchor="middle" font-family="Liberation Sans, sans-serif" font-size="21" fill="#fff">?</text></svg>
      <span>Are you sure you wish to complete this process?</span>
    </div>
    <div class="msg-foot d-flex">
      <button class="btn msg-btn def">Yes</button>
      <button class="btn msg-btn">No</button>
    </div>
  </section>

</div>

<script src="https://cdn.jsdelivr.net/npm/bootstrap@5.3.3/dist/js/bootstrap.bundle.min.js"></script>
</body>
</html>
